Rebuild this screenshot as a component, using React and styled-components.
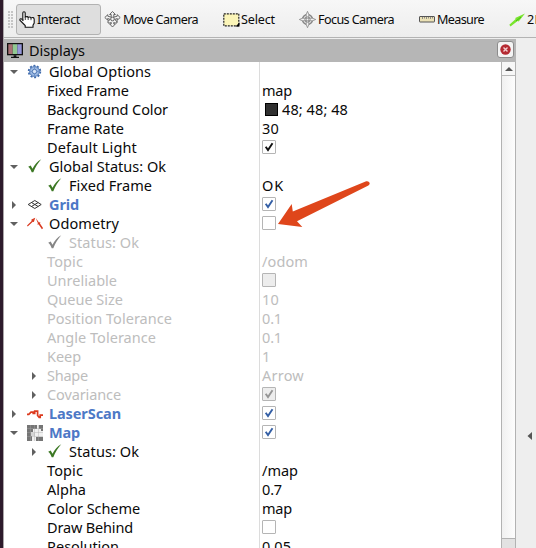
import React, { useLayoutEffect, useRef, useState } from "react";
import styled, { createGlobalStyle } from "styled-components";

const GlobalStyle = createGlobalStyle`
  * { box-sizing: border-box; }
  body { margin: 0; overflow: hidden; font-family: "Noto Sans", "Open Sans", sans-serif; font-size: 14.5px; color: #0a0a0a; }
  svg { display: block; flex: none; }
`;

const Window = styled.div`
  display: flex;
  position: relative;
  width: 536px;
  height: 548px;
  overflow: hidden;
  background: #eee;
`;
const DesktopEdge = styled.div`
  flex: none;
  width: 4px;
  background: #2d1a2b;
  border-right: 1px solid #aaa6a8;
`;
const Main = styled.div`
  display: flex;
  flex-direction: column;
  width: 532px;
`;
const Toolbar = styled.div`
  flex: none;
  display: flex;
  height: 38px;
  overflow: hidden;
  background: linear-gradient(#f7f7f7, #ededed);
  border-bottom: 1px solid #b3b3b3;
`;
const Grip = styled.div`
  flex: none;
  width: 5px;
  height: 17px;
  margin: 11px 3px 0 4px;
  background: radial-gradient(circle at 1px 1px, #c5c5c5 0.8px, transparent 1px) 0 0 / 3px 3px;
`;
const Tool = styled.div`
  flex: none;
  display: flex;
  align-items: center;
  width: ${(p) => p.$width}px;
  height: 31px;
  margin-top: 4px;
  padding: 0 0 0 ${(p) => p.$pad}px;
  border: 1px solid ${(p) => (p.$active ? "#b2b2b2" : "transparent")};
  border-radius: 3px;
  background: ${(p) => (p.$active ? "#dedede" : "transparent")};
  font-size: 12.6px;
  line-height: 28px;
  gap: ${(p) => p.$gap}px;
`;
const Body = styled.div`
  flex: 1;
  display: flex;
  min-height: 0;
  padding-top: 1px;
`;
const Dock = styled.div`
  width: 512px;
  flex: none;
`;
const DockTitle = styled.div`
  display: flex;
  align-items: center;
  height: 23px;
  padding: 0 2px 1px 3px;
  gap: 5px;
  background: #b6b6b6;
`;
const CloseButton = styled.div`
  display: grid;
  place-items: center;
  width: 17px;
  height: 17px;
  margin: -1px 0 0 auto;
  border: 1px solid #8c8c8c;
  border-radius: 3px;
  background: #f4f4f4;
`;
const TreeArea = styled.div`
  display: flex;
  height: 486px;
  background: #fff;
`;
const Tree = styled.div`
  width: 497px;
  overflow: hidden;
`;
const Row = styled.div`
  display: flex;
  height: 19px;
  color: ${(p) => (p.$muted ? "#bdbdbd" : "#0a0a0a")};
`;
const NameCell = styled.div`
  display: flex;
  align-items: center;
  width: 256px;
  height: 19px;
  border-right: 1px solid #dcdcdc;
  padding-left: ${(p) => (p.$depth ? 24 : 4)}px;
  line-height: 19px;
`;
const ArrowSlot = styled.div`
  flex: none;
  display: grid;
  place-items: center;
  width: 12px;
  height: 19px;
`;
const IconSlot = styled.div`
  flex: none;
  display: grid;
  place-items: center;
  width: 16px;
  height: 16px;
  margin: 0 6px 0 7px;
`;
const NoIcon = styled.div`
  width: 7px;
`;
const ValueCell = styled.div`
  display: flex;
  align-items: center;
  height: 19px;
  padding-left: 2px;
  line-height: 19px;
`;
const Check = styled.div`
  display: grid;
  place-items: center;
  width: 14px;
  height: 14px;
  margin-top: -1px;
  border: 1px solid #b5b5b5;
  border-radius: 1px;
  background: ${(p) => (p.$muted ? "#ededed" : "#fff")};
`;
const Swatch = styled.div`
  width: 13px;
  height: 13px;
  margin: 0 4px 0 3px;
  border: 1px solid #000;
  background: #303030;
`;
const Text = styled.span`
  flex: none;
  white-space: pre;
  font-weight: ${(p) => (p.$strong ? 700 : 400)};
  color: ${(p) => (p.$strong ? "#4d78c6" : "inherit")};
`;
const ScrollBar = styled.div`
  display: flex;
  flex-direction: column;
  width: 15px;
  height: 486px;
  border-left: 1px solid #b2b2b2;
  border-right: 1px solid #b2b2b2;
  background: #e2e2e2;
`;
const ScrollButton = styled.div`
  display: grid;
  place-items: center;
  height: 14px;
  border-bottom: 1px solid #b8b8b8;
  background: #f7f7f7;
`;
const ScrollThumb = styled.div`
  height: 463px;
  border-bottom: 1px solid #b2b2b2;
  background: linear-gradient(90deg, #f0f0f0, #fdfdfd);
`;
const Splitter = styled.div`
  display: flex;
  align-items: flex-start;
  width: 20px;
  padding: 391px 4px 0 3px;
  gap: 8px;
`;
const Dots = styled.div`
  width: 1px;
  height: 18px;
  background: repeating-linear-gradient(#aaa 0 1px, transparent 1px 3px);
`;
const Pointer = styled.svg`
  position: absolute;
  left: 276px;
  top: 178px;
`;

/* Spaces the letters of a label so that it fills the given width. */
function Label({ children, width, strong }) {
  const ref = useRef(null);
  const [spacing, setSpacing] = useState(0);
  useLayoutEffect(() => {
    if (!width) return;
    const natural = ref.current.getBoundingClientRect().width;
    setSpacing((width - natural) / children.length);
  }, []);
  return (
    <Text ref={ref} $strong={strong} style={{ letterSpacing: `${spacing}px` }}>
      {children}
    </Text>
  );
}

const Tick = ({ color }) => (
  <svg width="16" height="16" viewBox="0 0 16 16">
    <path d="M1.2 8.8 3.7 7.5 5.5 10.7C7.8 6.4 10.2 3.5 14.2 1.2 10.8 5.2 8.4 9 6.3 14.2L4.7 14.2C3.8 11.8 2.8 10.2 1.2 8.8Z" fill={color} transform="translate(0 -1)" />
  </svg>
);
const Gear = () => (
  <svg width="16" height="16" viewBox="0 0 16 16">
    <circle cx="7.5" cy="7.5" r="5.8" fill="none" stroke="#3f6aab" strokeWidth="1.8" strokeDasharray="2 1.65" />
    <circle cx="7.5" cy="7.5" r="4.9" fill="#9cb9e3" stroke="#4b76b7" />
    <circle cx="7.5" cy="7.5" r="2.2" fill="#dce7f7" stroke="#5179b5" />
    <path d="M7.5 3.2v2M7.5 9.8v2M3.2 7.5h2M9.8 7.5h2" stroke="#6c91c7" />
  </svg>
);
const GridIcon = () => (
  <svg width="16" height="16" viewBox="0 0 16 16" fill="none" stroke="#333">
    <path d="M1.2 7.5 7.8 3.5 14.2 7.5 7.8 11.5ZM4.5 5.5l6.7 4M11.2 5.5l-6.7 4" />
  </svg>
);
const OdometryIcon = () => (
  <svg width="16" height="16" viewBox="0 0 16 16">
    <path d="M0 9.4 4.6 4.9 4.4 3.6 8.2 1.8 6.9 5.9 5.8 5.8.7 10.4Z" fill="#d93a20" />
    <path d="M8.7 2 12 6.5 13.3 6 13 7.6 16.2 12.2 14.9 13.2 11.7 8.6 10.3 8.5 10.9 7.3Z" fill="#d93a20" />
  </svg>
);
const LaserIcon = () => (
  <svg width="16" height="16" viewBox="0 0 16 16" fill="none" stroke="#dc3a1e" strokeWidth="1.7">
    <path d="M0 8.3H1.8L4 6.2H6.2V7.4H7.7V5.1H10.6V9.5L12.2 11.5H13.2V9.2H16" />
  </svg>
);
const MapIcon = () => (
  <svg width="16" height="16" viewBox="0 0 16 16">
    <path d="M0 0h16v16H0z" fill="#f0f0f0" />
    <path d="M0 0h10v4H6v3H4v3h1v6H0zM12 0h4v6h-2V4h-2zM9 12h7v4H9z" fill="#757575" />
    <path d="M4 8h4v3H4z" fill="#d5d5d5" />
    <path d="M3.5 0v16M7.5 0v16M11.5 0v16M0 3.5h16M0 7.5h16M0 11.5h16" stroke="#aaa" strokeWidth=".4" />
  </svg>
);
const HandIcon = () => (
  <svg width="17" height="17" viewBox="0 0 17 17">
    <path d="M3.8 9V2Q3.8.7 5 .7T6.2 2V6Q8.7 5 9.1 6.4 11.4 5.4 11.9 6.9 15 5.7 15.2 8.2V12L14 14.2V16.3H6.2V14.5L.9 9.2Q.7 7.5 2.4 7.9Z" fill="#fff" stroke="#111" strokeWidth="1.1" />
    <path d="M3.8 8v2M6.3 6v3M9.2 6.5V9M12 7v2.2" stroke="#333" strokeWidth=".9" />
  </svg>
);
const MoveIcon = () => (
  <svg width="17" height="17" viewBox="0 0 17 17" fill="#f5f5f5" stroke="#555" strokeWidth=".9">
    <path d="M8.5.5 11.4 3.5H9.8V6.2L13.2 5.2V3.7L16.2 6.5 13.3 9.2V7.5L10.7 8.5 13 10.5V9.8V12H10.8L9.8 11.2V13H11.3L8.5 16 5.7 13H7.2V11.2L6.2 12H4V10L6.3 8.5 3.7 7.5V9.2L.8 6.5 3.8 3.7V5.2L7.2 6.2V3.5H5.6Z" />
    <circle cx="8.5" cy="8" r="1.8" />
  </svg>
);
const SelectIcon = () => (
  <svg width="17" height="14" viewBox="0 0 17 14">
    <rect x=".8" y=".8" width="15" height="12" fill="#fbf5b8" stroke="#222" strokeWidth="1.2" strokeDasharray="2 1" />
    <path d="M16.5 9.5v4h-4z" fill="#000" />
  </svg>
);
const FocusIcon = () => (
  <svg width="17" height="17" viewBox="0 0 17 17" fill="none" stroke="#858585">
    <circle cx="8.5" cy="8.5" r="5" strokeWidth="1.4" />
    <path d="M8.5.3 9.8 3.5V13.5L8.5 16.7 7.2 13.5V3.5ZM.3 8.5 3.5 7.2H13.5L16.7 8.5 13.5 9.8H3.5Z" strokeWidth=".8" fill="#f2f2f2" />
    <circle cx="8.5" cy="8.5" r="2.7" strokeWidth=".9" />
  </svg>
);
const RulerIcon = () => (
  <svg width="16" height="7" viewBox="0 0 16 7">
    <rect x=".5" y=".5" width="15" height="5.5" rx=".5" fill="#ebe1b5" stroke="#555" />
    <path d="M3.5 1v2M5.5 1v1.5M7.5 1v2M9.5 1v1.5M11.5 1v2M13.5 1v1.5" stroke="#777" strokeWidth=".8" />
  </svg>
);
const GoalIcon = () => (
  <svg width="17" height="14" viewBox="0 0 17 14">
    <path d="M.3 11.8 6.7 6.1 6.2 5 16 .6 9.7 8.4 8.6 8.1 1.5 13.5Z" fill="#79e52d" />
    <path d="m7 8 5-4" stroke="#45b91c" />
  </svg>
);
const MonitorIcon = () => (
  <svg width="17" height="17" viewBox="0 0 17 17">
    <path d="M0 1h16v12.3H0z" fill="#111" />
    <path d="M1.3 2.2h4.4v9.8H1.3z" fill="#a97075" />
    <path d="M5.7 2.2h4.6v9.8H5.7z" fill="#91c992" />
    <path d="M10.3 2.2h4.4v9.8h-4.4z" fill="#9597d9" />
    <path d="M6.6 13.3h2.8v1.4H12V16H4v-1.3h2.6z" fill="#111" />
  </svg>
);

const Expander = ({ open }) => (
  <svg width="8" height="8" viewBox="0 0 8 8">
    <path d={open ? "M0 2H8L4 6Z" : "M2 0V8L6 4Z"} fill="#606060" />
  </svg>
);
const CheckBox = ({ on, color = "#345fa5", muted }) => (
  <Check $muted={muted}>
    {on && (
      <svg width="10" height="10" viewBox="0 0 10 10">
        <path d="M1.7 4.8 4 8.1 8.5 1.3" fill="none" stroke={color} strokeWidth="1.9" />
      </svg>
    )}
  </Check>
);

const green = <Tick color="#3c7824" />;
const rows = [
  { name: "Global Options", w: 102, icon: <Gear />, arrow: "open" },
  { name: "Fixed Frame", w: 82, depth: 1, value: "map", vw: 30 },
  { name: "Background Color", w: 121, depth: 1, value: "48; 48; 48", vw: 66, swatch: true },
  { name: "Frame Rate", w: 77, depth: 1, value: "30", vw: 17 },
  { name: "Default Light", w: 90, depth: 1, check: { on: true, color: "#111" } },
  { name: "Global Status: Ok", w: 117, icon: green, arrow: "open" },
  { name: "Fixed Frame", w: 83, depth: 1, icon: green, value: "OK", vw: 22 },
  { name: "Grid", w: 30, icon: <GridIcon />, arrow: "closed", strong: true, check: { on: true } },
  { name: "Odometry", w: 70, icon: <OdometryIcon />, arrow: "open", check: {} },
  { name: "Status: Ok", w: 70, depth: 1, icon: <Tick color="#858585" />, muted: true },
  { name: "Topic", w: 36, depth: 1, value: "/odom", vw: 46, muted: true },
  { name: "Unreliable", w: 70, depth: 1, check: { muted: true }, muted: true },
  { name: "Queue Size", w: 76, depth: 1, value: "10", vw: 17, muted: true },
  { name: "Position Tolerance", w: 125, depth: 1, value: "0.1", vw: 20, muted: true },
  { name: "Angle Tolerance", w: 109, depth: 1, value: "0.1", vw: 20, muted: true },
  { name: "Keep", w: 34, depth: 1, value: "1", vw: 8, muted: true },
  { name: "Shape", w: 41, depth: 1, arrow: "closed", value: "Arrow", vw: 42, muted: true },
  { name: "Covariance", w: 74, depth: 1, arrow: "closed", check: { on: true, color: "#959595", muted: true }, muted: true },
  { name: "LaserScan", w: 72, icon: <LaserIcon />, arrow: "closed", strong: true, check: { on: true } },
  { name: "Map", w: 31, icon: <MapIcon />, arrow: "open", strong: true, check: { on: true } },
  { name: "Status: Ok", w: 70, depth: 1, icon: green, arrow: "closed" },
  { name: "Topic", w: 36, depth: 1, value: "/map", vw: 36 },
  { name: "Alpha", w: 39, depth: 1, value: "0.7", vw: 20 },
  { name: "Color Scheme", w: 93, depth: 1, value: "map", vw: 30 },
  { name: "Draw Behind", w: 86, depth: 1, check: {} },
  { name: "Resolution", w: 72, depth: 1, value: "0.05", vw: 29 },
];

const tools = [
  { name: "Interact", w: 43, width: 85, pad: 2, gap: 1, icon: <HandIcon />, active: true },
  { name: "Move Camera", w: 75, width: 117, pad: 2, gap: 2, icon: <MoveIcon /> },
  { name: "Select", w: 34, width: 78, pad: 4, gap: 1, icon: <SelectIcon /> },
  { name: "Focus Camera", w: 76, width: 118, pad: 2, gap: 2, icon: <FocusIcon /> },
  { name: "Measure", w: 47, width: 92, pad: 4, gap: 2, icon: <RulerIcon /> },
  { name: "2D Nav Goal", w: 76, width: 117, pad: 2, gap: 1, icon: <GoalIcon /> },
];

export default function App() {
  return (
    <>
      <GlobalStyle />
      <Window>
        <DesktopEdge />
        <Main>
          <Toolbar>
            <Grip />
            {tools.map((t) => (
              <Tool key={t.name} $active={t.active} $width={t.width} $pad={t.pad} $gap={t.gap}>
                {t.icon}
                <Label width={t.w}>{t.name}</Label>
              </Tool>
            ))}
          </Toolbar>
          <Body>
            <Dock>
              <DockTitle>
                <MonitorIcon />
                <Label width={56}>Displays</Label>
                <CloseButton>
                  <svg width="11" height="11" viewBox="0 0 11 11">
                    <circle cx="5.5" cy="5.5" r="5.2" fill="#b52a32" />
                    <path d="m3.5 3.5 4 4m0-4-4 4" stroke="#f2cfd1" strokeWidth="1.4" />
                  </svg>
                </CloseButton>
              </DockTitle>
              <TreeArea>
                <Tree>
                  {rows.map((r, i) => (
                    <Row key={i} $muted={r.muted}>
                      <NameCell $depth={r.depth}>
                        <ArrowSlot>{r.arrow && <Expander open={r.arrow === "open"} />}</ArrowSlot>
                        {r.icon ? <IconSlot>{r.icon}</IconSlot> : <NoIcon />}
                        <Label width={r.w} strong={r.strong}>{r.name}</Label>
                      </NameCell>
                      <ValueCell>
                        {r.swatch && <Swatch />}
                        {r.check && <CheckBox {...r.check} />}
                        {r.value && <Label width={r.vw}>{r.value}</Label>}
                      </ValueCell>
                    </Row>
                  ))}
                </Tree>
                <ScrollBar>
                  <ScrollButton>
                    <svg width="8" height="4" viewBox="0 0 8 4"><path d="M0 4H8L4 0Z" fill="#555" /></svg>
                  </ScrollButton>
                  <ScrollThumb />
                </ScrollBar>
              </TreeArea>
            </Dock>
            <Splitter>
              <Dots />
              <svg width="5" height="11" viewBox="0 0 5 11"><path d="M5 2V10L.5 6Z" fill="#555" /></svg>
            </Splitter>
          </Body>
        </Main>
        <Pointer width="96" height="54" viewBox="276 178 96 54">
          <path d="M278 224 291.7 204 292.8 211.4 366.2 181.3Q368.8 180.8 369.7 183 370 184.4 368.4 185.4L297 221.2 302.3 227Z" fill="#df461b" />
        </Pointer>
      </Window>
    </>
  );
}
